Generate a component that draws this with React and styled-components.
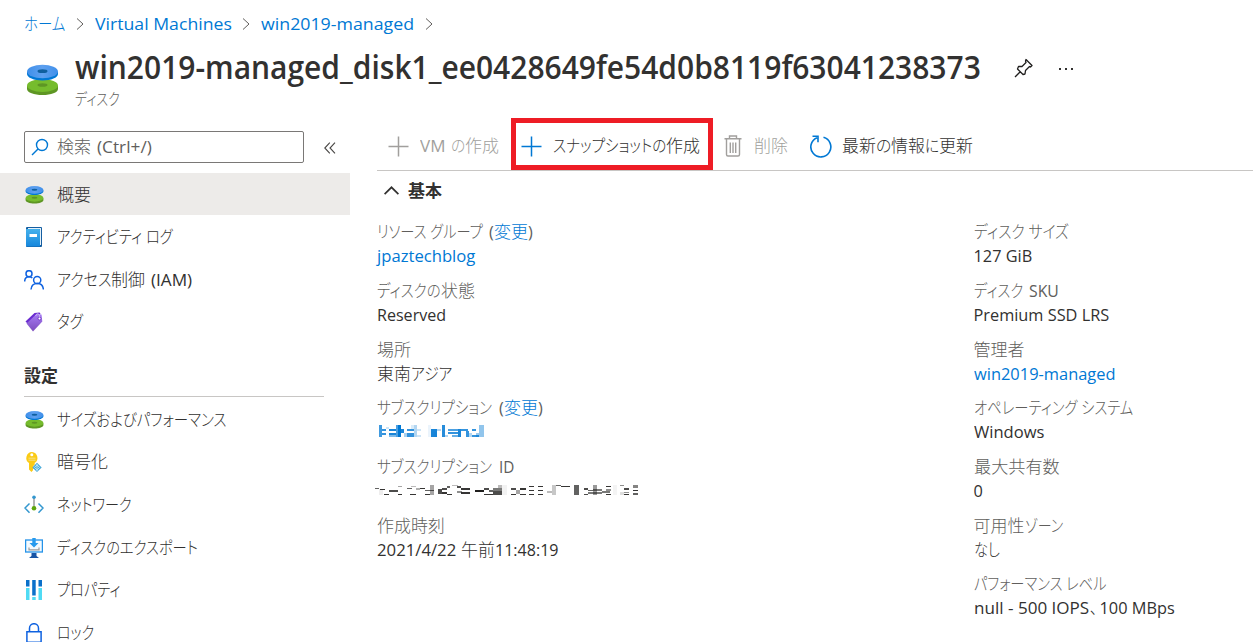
import React, { useLayoutEffect, useRef, useState } from "react";
import styled, { createGlobalStyle } from "styled-components";

const Global = createGlobalStyle`
  * { box-sizing: border-box; }
  html, body { margin: 0; background: #fff; overflow: hidden; }
  body {
    font-family: "Open Sans", "Noto Sans CJK JP", sans-serif;
    font-size: 16px;
    color: #323130;
  }
`;

/* ---------- text fitted to a column width ---------- */
const FitBox = styled.span`
  display: inline-block;
  white-space: pre;
  width: ${(p) => p.$w}px;
  margin-left: ${(p) => p.$gap || 0}px;
`;
const FitInner = styled.span`
  display: inline-block;
  transform-origin: 0 50%;
  font-feature-settings: "palt";
  font-size: ${(p) => (p.$cjk ? "1.06em" : "1.02em")};
  font-weight: ${(p) => (p.$cjk && !p.$strong ? 300 : "inherit")};
`;
function Fit({ w, gap, strong, children }) {
  const ref = useRef(null);
  const [scale, setScale] = useState(1);
  useLayoutEffect(() => {
    setScale(w / ref.current.offsetWidth);
  }, [w]);
  const cjk = /[\u3000-\u9fff]/.test(children);
  return (
    <FitBox $w={w} $gap={gap}>
      <FitInner ref={ref} $cjk={cjk} $strong={strong} style={{ transform: `scaleX(${scale})` }}>
        {children}
      </FitInner>
    </FitBox>
  );
}
const Link = styled.a`
  color: #0078d4;
`;
/* parts: [text, width, gap before, is link] */
const Parts = ({ parts }) =>
  parts.map(([t, w, gap, link], i) => {
    const f = <Fit key={i} w={w} gap={gap}>{t}</Fit>;
    return link ? <Link key={i}>{f}</Link> : f;
  });

/* ---------- page ---------- */
const Page = styled.div`
  width: 1253px;
  height: 642px;
  overflow: hidden;
  background: #fff;
`;
const Breadcrumb = styled.nav`
  display: flex;
  align-items: center;
  height: 48px;
  padding-left: 24px;
  line-height: 24px;
  color: #0078d4;
`;
const Chevron = styled.svg`
  width: 8px;
  height: 12px;
  margin: 0 11px 0 10.500px;
  flex: none;
`;
const Header = styled.header`
  display: flex;
  height: 70px;
  padding-left: 26px;
`;
const DiskLogo = styled.div`
  width: 33px;
  margin: 15px 16px 0 0;
`;
const Title = styled.h1`
  margin: 0;
  font-size: 32px;
  font-weight: 600;
  line-height: 38px;
  height: 40px;
`;
const Subtitle = styled.div`
  font-size: 14.500px;
  line-height: 24px;
  color: #605e5c;
`;
const PinSlot = styled.div`
  margin: 10px 0 0 33px;
  width: 20px;
`;
const MoreSlot = styled.div`
  margin: 12px 0 0 25px;
  width: 16px;
`;
const Body = styled.div`
  display: flex;
`;

/* ---------- sidebar ---------- */
const Sidebar = styled.aside`
  width: 350px;
  flex: none;
`;
const SearchRow = styled.div`
  display: flex;
  align-items: flex-start;
  padding: 13px 0 0 24px;
  height: 55px;
`;
const SearchBox = styled.div`
  display: flex;
  align-items: center;
  width: 280px;
  height: 32px;
  padding-left: 6px;
  border: 1px solid #7a7876;
  border-radius: 2px;
  color: #605e5c;
  line-height: 28px;
  svg { margin-right: 8px; }
`;
const Collapse = styled.div`
  display: flex;
  margin: 11px 0 0 20px;
`;
const Menu = styled.div`
  display: flex;
  flex-direction: column;
  gap: 0.600px;
`;
const MenuItem = styled.div`
  display: flex;
  align-items: center;
  height: 42px;
  padding: 1px 0 0 24px;
  line-height: 28px;
  background: ${(p) => (p.$active ? "#edebe9" : "transparent")};
`;
const IconSlot = styled.span`
  display: flex;
  justify-content: center;
  width: 20px;
  margin-right: 13px;
`;
const GroupTitle = styled.div`
  width: 300px;
  height: 54px;
  margin: 0 0 1.500px 24px;
  padding-top: 20px;
  line-height: 26px;
  font-weight: 600;
  border-bottom: 1px solid #c8c6c4;
`;

/* ---------- main ---------- */
const Main = styled.main`
  flex: 1;
  margin-left: 27px;
`;
const Toolbar = styled.div`
  display: flex;
  align-items: center;
  height: 53px;
  border-bottom: 1px solid #c8c6c4;
  line-height: 28px;
`;
const Command = styled.div`
  display: flex;
  align-items: center;
  height: 52px;
  margin-left: ${(p) => p.$ml}px;
  padding-top: 4px;
  gap: ${(p) => p.$gap}px;
  color: ${(p) => (p.$disabled ? "#a19f9d" : "#323130")};
`;
const Highlight = styled.div`
  display: flex;
  align-items: center;
  gap: 11px;
  width: 202px;
  height: 52px;
  margin-left: 12px;
  padding: 4px 0 0 5px;
  border: 5px solid #ee1c25;
`;
const SectionHead = styled.div`
  display: flex;
  align-items: center;
  height: 39px;
  padding-left: 7px;
  gap: 9px;
  font-weight: 600;
  line-height: 28px;
`;
const Columns = styled.div`
  display: grid;
  grid-template-columns: 596.500px 1fr;
  padding-top: 9.300px;
`;
const Field = styled.div`
  height: 58.700px;
`;
const Label = styled.div`
  height: 24px;
  line-height: 26px;
  color: #605e5c;
`;
const Value = styled.div`
  height: 26px;
  line-height: 26px;
  color: ${(p) => (p.$link ? "#0078d4" : "#323130")};
`;
const Mosaic = styled.svg`
  display: block;
  margin-left: ${(p) => p.$ml}px;
`;

/* ---------- icons ---------- */
const Disk = ({ size, id }) => (
  <svg width={size} height={size} viewBox="0 0 33 33">
    <defs>
      <linearGradient id={id} x1="0" y1="0" x2="1" y2="0">
        <stop offset="0" stopColor="#3f8fea" />
        <stop offset="0.5" stopColor="#5ea0ef" />
        <stop offset="1" stopColor="#3f8fea" />
      </linearGradient>
    </defs>
    <path d="M1 23v3c0 3.600 7 6 15.500 6S32 29.600 32 26v-3z" fill="#5e9624" />
    <ellipse cx="16.500" cy="22.500" rx="15.500" ry="6.500" fill="#76bc2d" />
    <ellipse cx="16.500" cy="22" rx="5" ry="1.800" fill="#5e9624" />
    <path d="M1 9v2c0 3.600 7 6.500 15.500 6.500S32 14.600 32 11V9z" fill="#0078d4" />
    <ellipse cx="16.500" cy="8.500" rx="15.500" ry="6.800" fill={`url(#${id})`} />
    <ellipse cx="16.500" cy="8.200" rx="5" ry="1.900" fill="#0f5f9f" />
  </svg>
);
const Sep = () => (
  <Chevron viewBox="0 0 8 12" fill="none" stroke="#605e5c" strokeWidth="1">
    <path d="M1 .5 7 6 1 11.500" />
  </Chevron>
);
const Plus = ({ color }) => (
  <svg width="21" height="21" viewBox="0 0 21 21" stroke={color} strokeWidth="1.500">
    <path d="M10.500.5v20M.5 10.500h20" />
  </svg>
);
const Pin = () => (
  <svg width="20" height="20" viewBox="0 0 20 20" fill="none" stroke="#201f1e" strokeWidth="1.300" strokeLinejoin="round">
    <path d="M12 1.500 18 7.500 16.500 9 15.500 8.500 11.500 12.500 11 16 9 16.500 3.500 11 4.500 8.500 8 8.500 12 4.500 11.500 3zM6.500 13.500 1 19" />
  </svg>
);
const Dots = () => (
  <svg width="16" height="18" viewBox="0 0 16 18" fill="#323130">
    <path d="M0 8h2v2H0zM6 8h2v2H6zM12 8h2v2h-2z" />
  </svg>
);
const SearchIcon = () => (
  <svg width="18" height="18" viewBox="0 0 18 18" fill="none" stroke="#0078d4" strokeWidth="1.400">
    <circle cx="11" cy="7" r="5.500" />
    <path d="M7 11 1 17" />
  </svg>
);
const CollapseIcon = () => (
  <svg width="12" height="12" viewBox="0 0 12 12" fill="none" stroke="#484644" strokeWidth="1.100">
    <path d="M5.800.7.800 6l5 5.300M11 .7 6 6l5 5.300" />
  </svg>
);
const Trash = () => (
  <svg width="18" height="22" viewBox="0 0 18 22" fill="none" stroke="#a19f9d" strokeWidth="1.400">
    <path d="M.5 3.800h17M5.500 3.500V1h7v2.500M2.500 4v15.500q0 1.500 1.500 1.500h10q1.500 0 1.500-1.500V4M6.300 7.500V18M9 7.500V18M11.700 7.500V18" />
  </svg>
);
const Refresh = () => (
  <svg width="22" height="23" viewBox="0 0 22 23" fill="none" stroke="#0078d4" strokeWidth="1.600">
    <path d="M13.500 2.300A10 10 0 1 1 7 2.700M2.500 1.300H8v6" />
  </svg>
);
const Caret = () => (
  <svg width="15" height="9" viewBox="0 0 15 9" fill="none" stroke="#323130" strokeWidth="1.700">
    <path d="M.6 8.200 7.500 1.300l6.900 6.900" />
  </svg>
);
const Book = () => (
  <svg width="16" height="20" viewBox="0 0 16 20">
    <defs>
      <linearGradient id="bk" x1="0" y1="0" x2="0" y2="1">
        <stop offset="0" stopColor="#45b1ec" />
        <stop offset="1" stopColor="#1687dc" />
      </linearGradient>
    </defs>
    <rect width="16" height="20" rx="1" fill="#155ea1" />
    <path d="M2 1h13v17h-1V2H2z" fill="#e4f1fa" />
    <rect y="2" width="14" height="17.500" rx=".6" fill="url(#bk)" />
    <rect x="3.500" y="7" width="7.500" height="3" fill="#fff" />
  </svg>
);
const People = () => (
  <svg width="20" height="20" viewBox="0 0 20 20" fill="none" stroke="#0f62e0" strokeWidth="1.500">
    <circle cx="5" cy="3.700" r="3" />
    <path d="M.7 11.500C.7 8.500 2.400 6.700 5 6.700c1.500 0 2.500.5 3.300 1.400" />
    <circle cx="13.200" cy="10" r="3.600" />
    <path d="M7 19.500c.3-3.700 2.800-5.900 6.200-5.900s5.900 2.200 6.200 5.900" />
  </svg>
);
const Tag = () => (
  <svg width="18" height="20" viewBox="0 0 18 20">
    <defs>
      <linearGradient id="tg" x1="0" y1="0" x2="0" y2="1">
        <stop offset="0" stopColor="#a67af4" />
        <stop offset="1" stopColor="#7c4dbd" />
      </linearGradient>
    </defs>
    <path d="M.5 9.500 9.500 1l5-.6 1 1L4 13z" fill="#6a2bd0" />
    <path d="M1.500 11.500 11.500 2l5 .6.800 7-9.300 9.800z" fill="url(#tg)" />
    <circle cx="14.500" cy="6.500" r="1.500" fill="#fff" stroke="#7339c8" />
    <path d="M10.800 4c0-2.500 3.500-3.500 4 .8" fill="none" stroke="#d6c3f3" />
  </svg>
);
const KeyIcon = () => (
  <svg width="18" height="20" viewBox="0 0 18 20">
    <path d="M7 0a6 6 0 0 0-3 11v6.500L6.500 20 8 18.300V17l1.500-1.300L8 14.200l1.700-1.400V11A6 6 0 0 0 7 0z" fill="#fbcb15" />
    <circle cx="6.800" cy="2.800" r="1.500" fill="#fff" />
    <path d="M3.500 6.200h7M3.500 8.200h7" stroke="#f5e08c" />
    <path d="m12 10.700 4.700 4.700L12 20l-4.700-4.600z" fill="#47a9d9" />
    <path d="m9.500 15.400 2.500-2.500 2.500 2.500-2.500 2.500zM12 12v7" fill="none" stroke="#c7ecf8" strokeWidth=".9" />
  </svg>
);
const Network = () => (
  <svg width="20" height="20" viewBox="0 0 20 20" fill="none" stroke="#3397cf" strokeWidth="1.500">
    <path d="M5.500 8.500 1 13l4.500 4.700M14.500 8.500 19 13l-4.500 4.700" />
    <path d="M10 2.500v10" stroke="#9b9b9b" />
    <circle cx="10" cy="2.300" r="1.800" fill="#3397cf" stroke="none" />
    <circle cx="10" cy="13.200" r="2.300" fill="#5ea60c" stroke="none" />
  </svg>
);
const Export = () => (
  <svg width="18" height="20" viewBox="0 0 18 20">
    <rect x=".6" y="2" width="16.800" height="12" fill="#f4fafe" stroke="#2492e8" strokeWidth="1.300" />
    <path d="M7.300 0h3.400v5h2.800L9 9.500 4.500 5h2.800z" fill="#269aee" />
    <path d="M4 9.500v2.300h10V9.500" fill="none" stroke="#9b9b9b" strokeWidth="1.200" />
    <path d="M6.500 15h5v3l2.500 2H4l2.500-2z" fill="#1754a5" />
  </svg>
);
const Properties = () => (
  <svg width="16" height="20" viewBox="0 0 16 20">
    <path d="M0 0h3.500v6.500H0zM6.200 0h3.500v15.500H6.200zM12.500 0H16v6.500h-3.500z" fill="#0b70ca" />
    <path d="M0 8h3.500v12H0zM6.200 17h3.500v3H6.200zM12.500 8H16v12h-3.500z" fill="#50dbf4" />
  </svg>
);
const Lock = () => (
  <svg width="16" height="20" viewBox="0 0 16 20" fill="none" stroke="#0f62e0" strokeWidth="1.500">
    <path d="M.9 8.800h14.200v10.400H.9zM3.500 8.800V5.200a4.500 4.500 0 0 1 9 0v3.600" />
  </svg>
);

/* ---------- masked values: [x, y, w, h, opacity] on a 3x grid ---------- */
const maskedName = [
  [0, 0, 9, 36, 0.75], [9, 12, 12, 6, 0.8], [9, 24, 12, 6, 0.8], [21, 6, 10, 6, 0.2], [30, 12, 20, 6, 0.9], [30, 24, 20, 6, 0.9], [30, 30, 20, 6, 0.5],
  [50, 0, 8, 36, 0.7], [58, 0, 8, 36, 1], [66, 12, 8, 12, 0.9], [74, 24, 10, 12, 0.35], [84, 12, 20, 6, 0.8], [84, 24, 20, 12, 0.8],
  [95, 0, 10, 12, 0.15], [105, 0, 10, 36, 0.3], [115, 12, 12, 6, 0.2], [115, 30, 12, 6, 0.2],
  [147, 0, 8, 36, 0.08], [155, 12, 20, 24, 0.9], [166, 20, 9, 16, 0.1], [175, 12, 12, 6, 0.3], [189, 0, 9, 36, 0.85], [198, 30, 10, 6, 0.3],
  [208, 12, 30, 5, 0.7], [208, 22, 30, 6, 0.8], [218, 31, 20, 5, 0.6], [238, 12, 8, 24, 0.9], [246, 12, 22, 6, 0.8], [260, 18, 10, 18, 0.8],
  [270, 24, 10, 12, 0.3], [280, 12, 10, 6, 0.8], [280, 30, 20, 6, 0.8], [290, 24, 10, 12, 0.4], [300, 0, 15, 36, 0.43],
];
const maskedId = [
  [0, 9, 12, 3, 0.7], [12, 12, 12, 18, 0.08], [15, 12, 14, 4, 0.9], [26, 27, 16, 3, 0.9], [42, 16, 26, 5, 0.8], [68, 2, 12, 4, 0.4], [68, 27, 12, 3, 0.9],
  [95, 10, 15, 3, 0.7], [108, 3, 14, 4, 0.3], [106, 27, 16, 3, 0.9], [122, 10, 14, 6, 0.35], [136, 10, 14, 3, 0.9], [150, 27, 14, 3, 0.9], [150, 14, 26, 5, 0.7], [164, 0, 12, 30, 0.4],
  [188, 12, 14, 14, 0.8], [202, 10, 14, 4, 0.8], [202, 22, 14, 4, 0.9], [217, 4, 8, 6, 0.7], [217, 27, 14, 3, 0.9], [232, 0, 16, 4, 0.3], [246, 4, 12, 6, 0.8], [246, 18, 14, 6, 0.5], [258, 10, 26, 6, 0.9], [258, 22, 26, 6, 0.9],
  [300, 16, 27, 4, 1], [327, 10, 14, 4, 0.8], [327, 27, 27, 3, 0.9], [341, 16, 14, 5, 0.7], [354, 10, 27, 7, 0.6], [354, 17, 27, 13, 0.8], [368, 0, 14, 10, 0.3], [382, 0, 14, 30, 0.06],
  [408, 10, 14, 4, 0.8], [408, 27, 14, 3, 0.9], [422, 14, 14, 12, 0.4], [436, 10, 16, 4, 0.9], [436, 27, 16, 3, 0.9], [462, 2, 14, 4, 0.9], [462, 14, 14, 4, 0.9], [462, 27, 14, 3, 0.9], [490, 2, 14, 4, 0.9], [490, 14, 14, 4, 0.9], [490, 27, 14, 3, 0.9],
  [516, 18, 14, 6, 0.3], [530, 0, 12, 30, 0.25], [542, 0, 16, 3, 0.7], [558, 2, 28, 5, 0.9], [596, 0, 16, 30, 0.7],
  [626, 10, 14, 4, 0.8], [626, 27, 14, 3, 0.8], [640, 14, 14, 5, 0.7], [654, 0, 12, 30, 0.45], [654, 12, 26, 6, 0.6], [640, 21, 40, 6, 0.6], [680, 18, 26, 5, 0.6],
  [692, 2, 16, 5, 0.9], [692, 12, 16, 6, 0.5], [692, 27, 16, 3, 0.9], [714, 0, 12, 30, 0.05], [734, 0, 14, 4, 0.5], [734, 22, 14, 8, 0.15], [748, 10, 14, 4, 0.8], [748, 20, 14, 4, 0.5], [748, 27, 14, 3, 0.9], [774, 0, 15, 8, 0.55], [774, 14, 15, 4, 0.9], [774, 25, 15, 5, 0.7],
];
const Masked = ({ cells, width, height, ml, color }) => (
  <Mosaic $ml={ml} width={width} height={24} viewBox={`0 ${-(72 - height) / 2} ${width * 3} 72`} shapeRendering="crispEdges">
    {cells.map(([x, y, w, h, o], i) => (
      <rect key={i} x={x} y={y} width={w} height={h} fill={color} opacity={o} />
    ))}
  </Mosaic>
);

const mainMenu = [
  [<Disk size={19} id="dk1" />, [["概要", 34]], true],
  [<Book />, [["アクティビティ ログ", 116]]],
  [<People />, [["アクセス", 54], ["制御", 34], ["(IAM)", 41, 6]]],
  [<Tag />, [["タグ", 26]]],
];
const settingsMenu = [
  [<Disk size={19} id="dk2" />, [["サイズおよびパフォーマンス", 170]]],
  [<KeyIcon />, [["暗号化", 51]]],
  [<Network />, [["ネットワーク", 75]]],
  [<Export />, [["ディスクのエクスポート", 141]]],
  [<Properties />, [["プロパティ", 63]]],
  [<Lock />, [["ロック", 37]]],
];
const MenuList = ({ items }) => (
  <Menu>
    {items.map(([icon, parts, active], i) => (
      <MenuItem key={i} $active={active}>
        <IconSlot>{icon}</IconSlot>
        <Parts parts={parts} />
      </MenuItem>
    ))}
  </Menu>
);

const left = [
  { l: [["リソース グループ", 106], ["(", 5, 6], ["変更", 34, 0, true], [")", 5]], v: [["jpaztechblog", 98]], link: true },
  { l: [["ディスクの", 64], ["状態", 34]], v: [["Reserved", 69]] },
  { l: [["場所", 34]], v: [["東南", 34], ["アジア", 41]] },
  { l: [["サブスクリプション", 115], ["(", 5, 7], ["変更", 34, 0, true], [")", 5]], masked: <Masked cells={maskedName} width={106} height={36} ml={2} color="#0078d4" /> },
  { l: [["サブスクリプション", 115], ["ID", 15, 7]], masked: <Masked cells={maskedId} width={264} height={30} ml={-2} color="#201f1e" /> },
  { l: [["作成時刻", 68]], v: [["2021/4/22", 79], ["午前", 34, 5], ["11:48:19", 64]] },
];
const right = [
  { l: [["ディスク サイズ", 95]], v: [["127 GiB", 59]] },
  { l: [["ディスク", 49], ["SKU", 30, 6]], v: [["Premium SSD LRS", 136]] },
  { l: [["管理者", 51]], v: [["win2019-managed", 142]], link: true },
  { l: [["オペレーティング システム", 159]], v: [["Windows", 70]] },
  { l: [["最大共有数", 86]], v: [["0", 9]] },
  { l: [["可用性", 51], ["ゾーン", 38]], v: [["なし", 26]] },
  { l: [["パフォーマンス レベル", 133]], v: [["null - 500 IOPS", 115], ["、", 7, 1], ["100 MBps", 75, 3]] },
];
const Fields = ({ items }) => (
  <div>
    {items.map((f, i) => (
      <Field key={i}>
        <Label><Parts parts={f.l} /></Label>
        {f.masked || <Value $link={f.link}><Parts parts={f.v} /></Value>}
      </Field>
    ))}
  </div>
);

export default function App() {
  return (
    <Page>
      <Global />
      <Breadcrumb>
        <Fit w={41}>ホーム</Fit>
        <Sep />
        <Fit w={136.5}>Virtual Machines</Fit>
        <Sep />
        <Fit w={153.5}>win2019-managed</Fit>
        <Sep />
      </Breadcrumb>
      <Header>
        <DiskLogo><Disk size={33} id="dk0" /></DiskLogo>
        <div>
          <Title><Fit w={906}>win2019-managed_disk1_ee0428649fe54d0b8119f63041238373</Fit></Title>
          <Subtitle><Fit w={45}>ディスク</Fit></Subtitle>
        </div>
        <PinSlot><Pin /></PinSlot>
        <MoreSlot><Dots /></MoreSlot>
      </Header>
      <Body>
        <Sidebar>
          <SearchRow>
            <SearchBox>
              <SearchIcon />
              <Parts parts={[["検索", 34], ["(Ctrl+/)", 55, 6]]} />
            </SearchBox>
            <Collapse><CollapseIcon /></Collapse>
          </SearchRow>
          <MenuList items={mainMenu} />
          <GroupTitle><Fit w={34} strong>設定</Fit></GroupTitle>
          <MenuList items={settingsMenu} />
        </Sidebar>
        <Main>
          <Toolbar>
            <Command $ml={11} $gap={11} $disabled>
              <Plus color="#a19f9d" />
              <span><Parts parts={[["VM", 25], ["の", 14, 6], ["作成", 34]]} /></span>
            </Command>
            <Highlight>
              <Plus color="#0078d4" />
              <span><Parts parts={[["スナップショットの", 113], ["作成", 34]]} /></span>
            </Highlight>
            <Command $ml={11} $gap={12} $disabled>
              <Trash />
              <Fit w={34}>削除</Fit>
            </Command>
            <Command $ml={22} $gap={10}>
              <Refresh />
              <span><Parts parts={[["最新", 34], ["の", 15], ["情報", 34], ["に", 14], ["更新", 34]]} /></span>
            </Command>
          </Toolbar>
          <SectionHead>
            <Caret />
            <Fit w={34} strong>基本</Fit>
          </SectionHead>
          <Columns>
            <Fields items={left} />
            <Fields items={right} />
          </Columns>
        </Main>
      </Body>
    </Page>
  );
}
